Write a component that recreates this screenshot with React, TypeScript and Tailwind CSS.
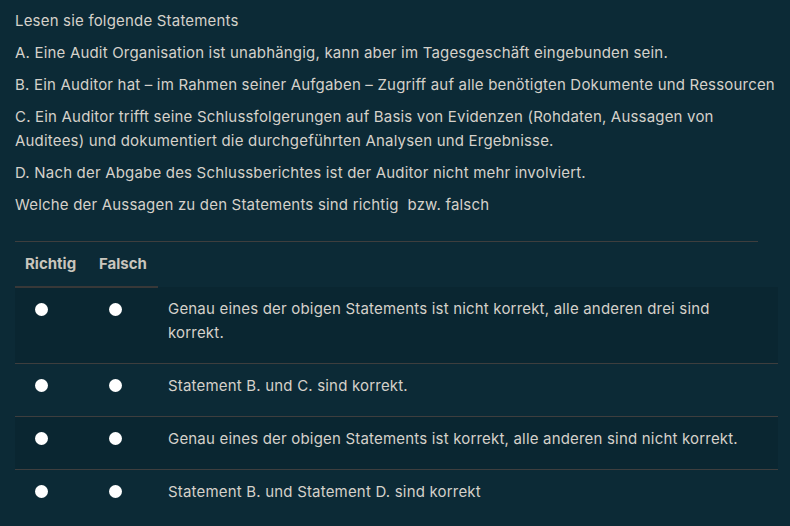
import React from "react";

type Answer = {
  id: number;
  text: string;
};

const statements = [
  "A. Eine Audit Organisation ist unabhängig, kann aber im Tagesgeschäft eingebunden sein.",
  "B. Ein Auditor hat – im Rahmen seiner Aufgaben – Zugriff auf alle benötigten Dokumente und Ressourcen",
  "C. Ein Auditor trifft seine Schlussfolgerungen auf Basis von Evidenzen (Rohdaten, Aussagen von Auditees) und dokumentiert die durchgeführten Analysen und Ergebnisse.",
  "D. Nach der Abgabe des Schlussberichtes ist der Auditor nicht mehr involviert.",
];

const answers: Answer[] = [
  { id: 1, text: "Genau eines der obigen Statements ist nicht korrekt, alle anderen drei sind korrekt." },
  { id: 2, text: "Statement B. und C. sind korrekt." },
  { id: 3, text: "Genau eines der obigen Statements ist korrekt, alle anderen sind nicht korrekt." },
  { id: 4, text: "Statement B. und Statement D. sind korrekt" },
];

function Radio() {
  return <span className="block w-[13px] h-[13px] rounded-full bg-white" />;
}

export default function App() {
  return (
    <div
      className="w-[790px] h-[526px] overflow-hidden bg-[#0c2a36] text-[#d5d1ca] text-[15px] leading-6 tracking-[0.19px] pl-[15px] pr-[12px] pt-[9px]"
      style={{ fontFamily: "Inter, 'Noto Sans', sans-serif" }}
    >
      <p className="mb-2">Lesen sie folgende Statements</p>
      {statements.map((s) => (
        <p key={s} className="mb-2">
          {s}
        </p>
      ))}
      <p className="mb-2">Welche der Aussagen zu den Statements sind richtig&nbsp; bzw. falsch</p>

      <div className="mt-6 w-[743px] h-px bg-[#3e3e3e]" />

      <table className="w-full border-collapse">
        <thead>
          <tr>
            <th className="px-[10px] pt-[10px] pb-[10px] text-left font-bold text-[#c9c5bd] tracking-normal border-b-2 border-[#383838] w-[74px]">
              Richtig
            </th>
            <th className="px-[10px] pt-[10px] pb-[10px] text-left font-bold text-[#c9c5bd] tracking-normal border-b-2 border-[#383838] w-[69px]">
              Falsch
            </th>
            <th />
          </tr>
        </thead>
        <tbody>
          {answers.map((a, i) => (
            <tr key={a.id} className={i % 2 === 0 ? "bg-[#0a2631]" : ""}>
              <td className={"px-[10px] py-[10px] align-top " + (i > 0 ? "border-t border-[#3e3e3e]" : "")}>
                <div className="pl-[10px] pt-[5px]">
                  <Radio />
                </div>
              </td>
              <td className={"px-[10px] py-[10px] align-top " + (i > 0 ? "border-t border-[#3e3e3e]" : "")}>
                <div className="pl-[10px] pt-[5px]">
                  <Radio />
                </div>
              </td>
              <td className={"px-[10px] py-[10px] align-top " + (i > 0 ? "border-t border-[#3e3e3e]" : "")}>
                <p className="mb-2 pr-[18px]">{a.text}</p>
              </td>
            </tr>
          ))}
        </tbody>
      </table>
    </div>
  );
}
